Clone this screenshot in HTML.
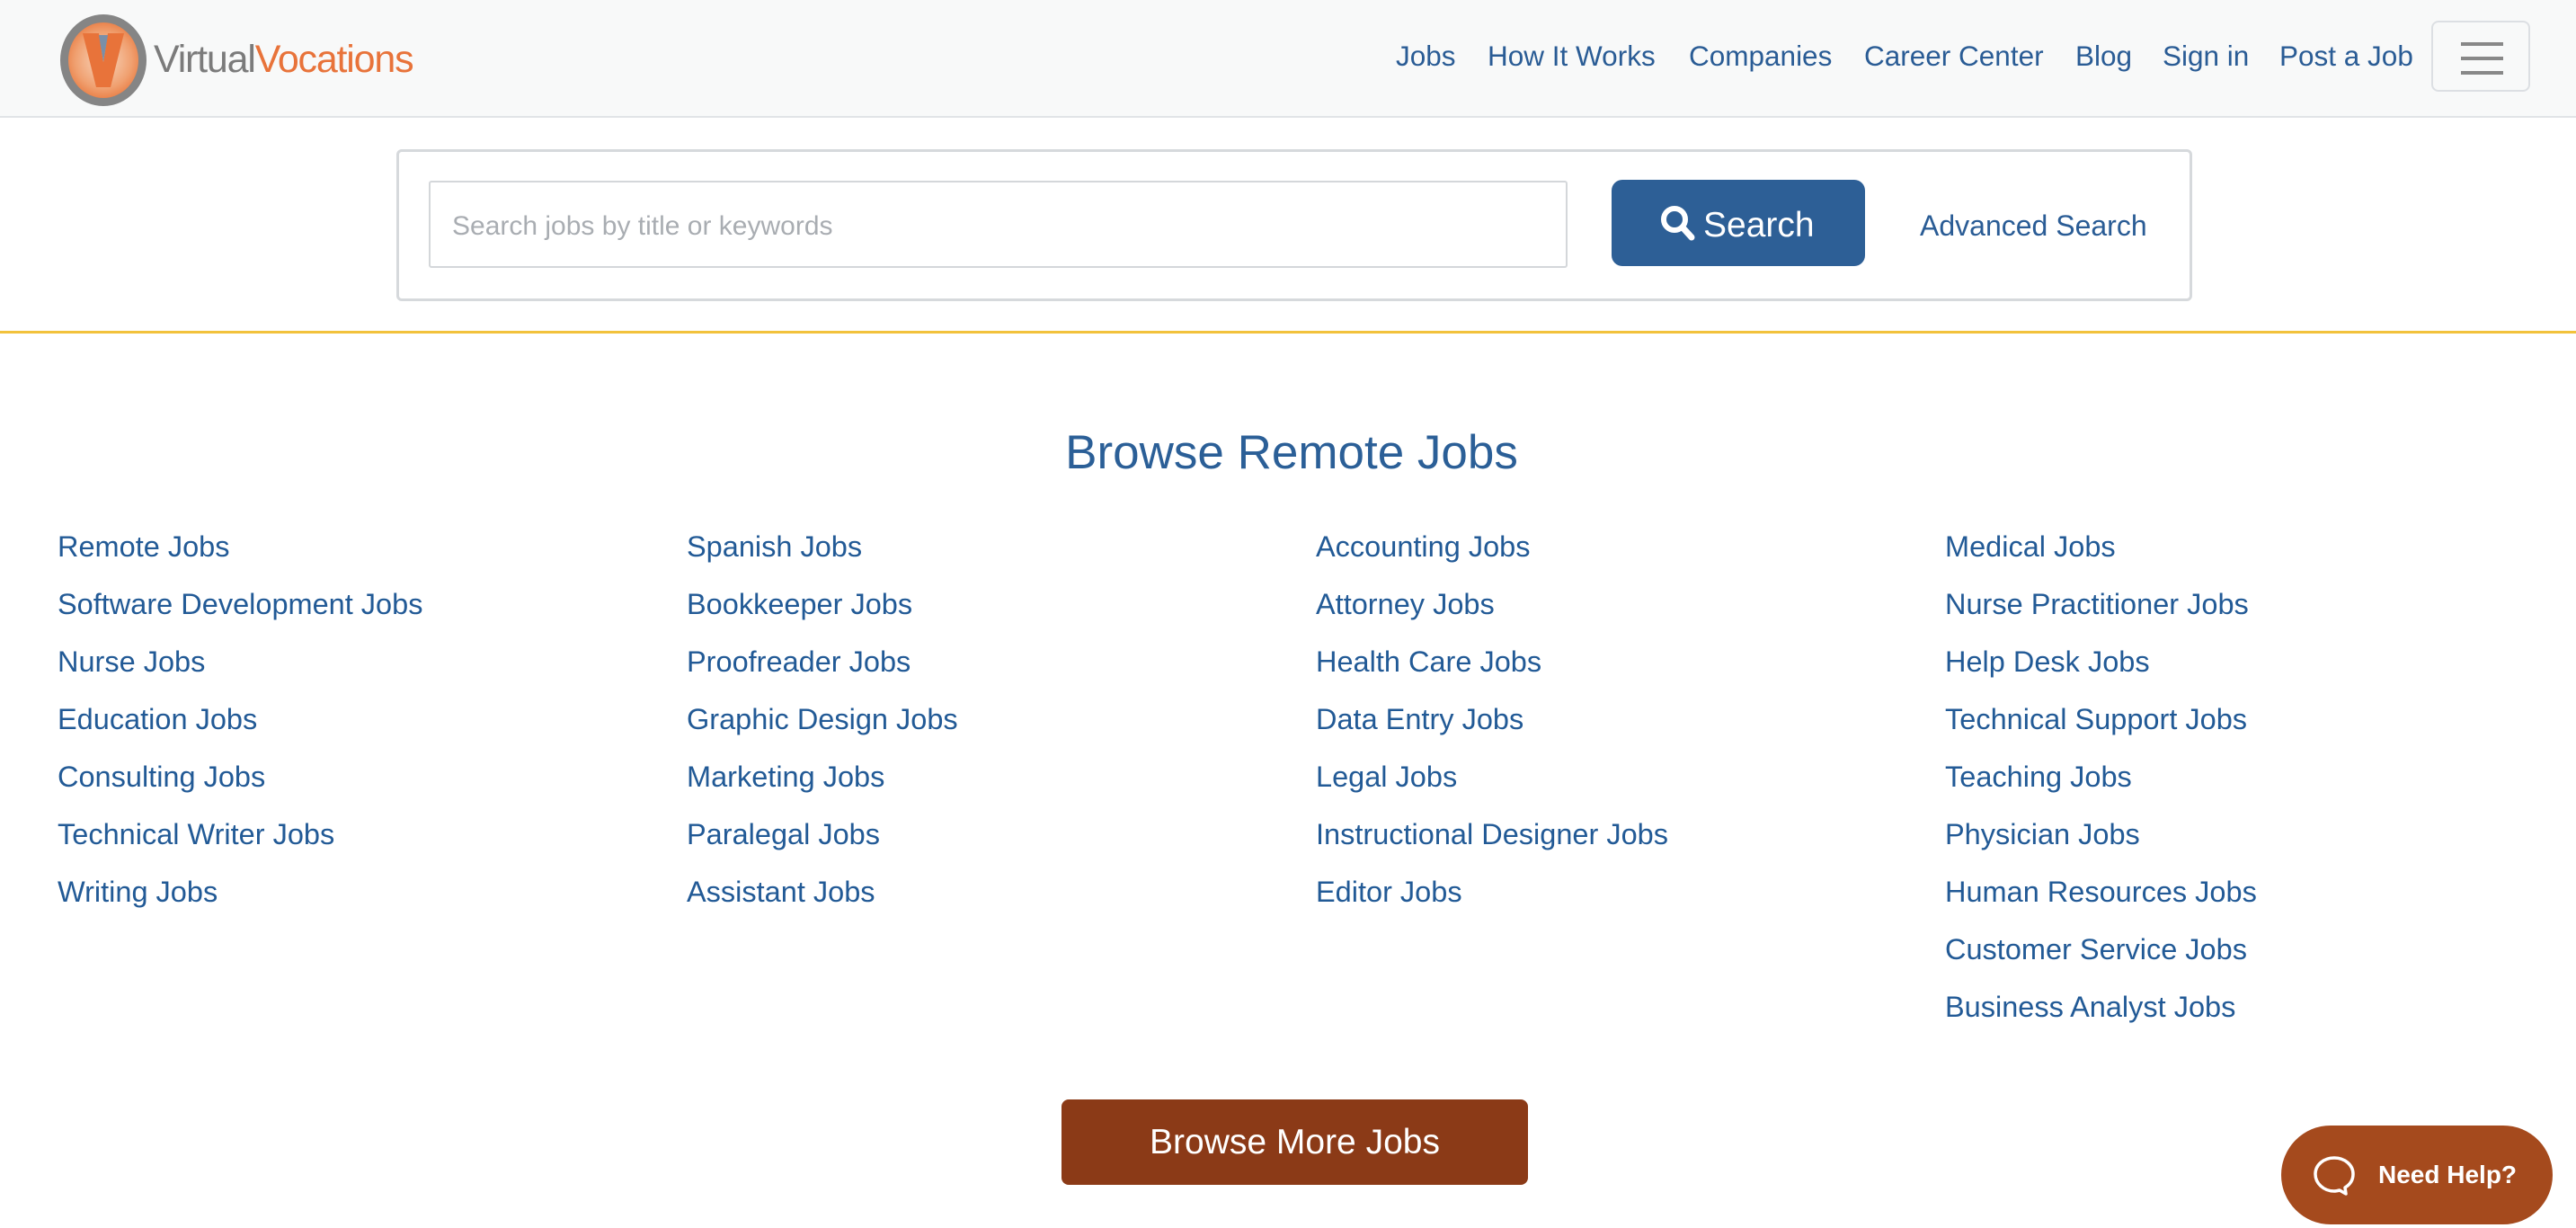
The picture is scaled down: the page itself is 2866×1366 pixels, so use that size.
<!DOCTYPE html>
<html><head><meta charset="utf-8"><style>
*{box-sizing:border-box;margin:0;padding:0}
body{width:2866px;height:1366px;overflow:hidden;background:#fff;font-family:"Liberation Sans",Arial,sans-serif;position:relative;color:#1f5a96}
.hdr{position:absolute;left:0;top:0;width:2866px;height:131px;background:#f8f9f9;border-bottom:2px solid #e1e4e7}
.logo{position:absolute;left:67px;top:16px;width:96px;height:102px;border-radius:50%;background:radial-gradient(circle,#f8d8c0 0%,#f0a070 55%,#e87a40 80%);border:9px solid #858585}
.logot{position:absolute;left:171px;top:42px;font-size:43px;letter-spacing:-1.2px;color:#7b7b7b}
.logot span{color:#e8733a}
.nav{position:absolute;top:44px;font-size:31.5px;color:#2a5c95}
.hamb{position:absolute;left:2705px;top:23px;width:110px;height:79px;border:2px solid #dcdfe3;border-radius:8px}
.hamb i{position:absolute;left:31px;width:47px;height:4px;background:#888}
.sbox{position:absolute;left:441px;top:166px;width:1998px;height:169px;border:3px solid #d6d9dc;border-radius:6px}
.inp{position:absolute;left:477px;top:201px;width:1267px;height:97px;border:2px solid #d4d7da;border-radius:3px;font-size:30px;color:#a9adb2;padding:32px 0 0 24px}
.btn{position:absolute;left:1793px;top:200px;width:282px;height:96px;background:#2d5f96;border-radius:12px;color:#fff;font-size:39px;padding:29px 0 0 102px}
.adv{position:absolute;left:2136px;top:233px;font-size:32px;color:#2a5c95}
.yl{position:absolute;left:0;top:368px;width:2866px;height:3px;background:#f2c23c}
h1{position:absolute;left:0;width:2866px;top:473px;text-align:center;font-weight:normal;font-size:53px;color:#2b5f97;padding-left:8px}
.col{position:absolute;top:576px;font-size:32.5px;line-height:64px;color:#225a96}
.more{position:absolute;left:1181px;top:1223px;width:519px;height:95px;background:#8b3a17;border-radius:8px;color:#fff;font-size:39px;text-align:center;line-height:95px}
.help{position:absolute;left:2538px;top:1252px;width:302px;height:110px;background:#a54a1d;border-radius:55px;color:#fff;font-weight:bold;font-size:28px}
</style></head><body>
<div class="hdr">
<div class="logo"><svg width="78" height="84" viewBox="0 0 78 84" style="position:absolute;left:0;top:0"><path d="M16 12 H34 L39 44 L44 12 H62 L47 72 H31 Z" fill="#e8733a"/><path d="M34 14 L39 44 L44 14 Z" fill="#7a8fa8"/></svg></div>
<div class="logot">Virtual<span>Vocations</span></div>
<div class="nav" style="left:1553px">Jobs</div>
<div class="nav" style="left:1655px">How It Works</div>
<div class="nav" style="left:1879px">Companies</div>
<div class="nav" style="left:2074px">Career Center</div>
<div class="nav" style="left:2309px">Blog</div>
<div class="nav" style="left:2406px">Sign in</div>
<div class="nav" style="left:2536px">Post a Job</div>
<div class="hamb"><i style="top:22px"></i><i style="top:38px"></i><i style="top:54px"></i></div>
</div>
<div class="sbox"></div>
<div class="inp">Search jobs by title or keywords</div>
<div class="btn"><svg width="44" height="44" viewBox="0 0 44 44" style="position:absolute;left:52px;top:26px"><circle cx="18" cy="18" r="12" fill="none" stroke="#fff" stroke-width="6"/><path d="M27 27 L37 38" stroke="#fff" stroke-width="7" stroke-linecap="round"/></svg>Search</div>
<div class="adv">Advanced Search</div>
<div class="yl"></div>
<h1>Browse Remote Jobs</h1>
<div class="col" style="left:64px">Remote Jobs<br>Software Development Jobs<br>Nurse Jobs<br>Education Jobs<br>Consulting Jobs<br>Technical Writer Jobs<br>Writing Jobs</div>
<div class="col" style="left:764px">Spanish Jobs<br>Bookkeeper Jobs<br>Proofreader Jobs<br>Graphic Design Jobs<br>Marketing Jobs<br>Paralegal Jobs<br>Assistant Jobs</div>
<div class="col" style="left:1464px">Accounting Jobs<br>Attorney Jobs<br>Health Care Jobs<br>Data Entry Jobs<br>Legal Jobs<br>Instructional Designer Jobs<br>Editor Jobs</div>
<div class="col" style="left:2164px">Medical Jobs<br>Nurse Practitioner Jobs<br>Help Desk Jobs<br>Technical Support Jobs<br>Teaching Jobs<br>Physician Jobs<br>Human Resources Jobs<br>Customer Service Jobs<br>Business Analyst Jobs</div>
<div class="more">Browse More Jobs</div>
<div class="help"><svg width="52" height="48" viewBox="0 0 52 48" style="position:absolute;left:35px;top:33px"><path d="M24 3 C36 3 45 11 45 21 C45 28 41 33 36 36 L37 43 L30 39 C28 39.5 26 40 24 40 C12 40 3 31 3 21 C3 11 12 3 24 3 Z" fill="none" stroke="#fff" stroke-width="3.5" stroke-linejoin="round"/></svg><span style="position:absolute;left:108px;top:39px">Need Help?</span></div>
</body></html>
